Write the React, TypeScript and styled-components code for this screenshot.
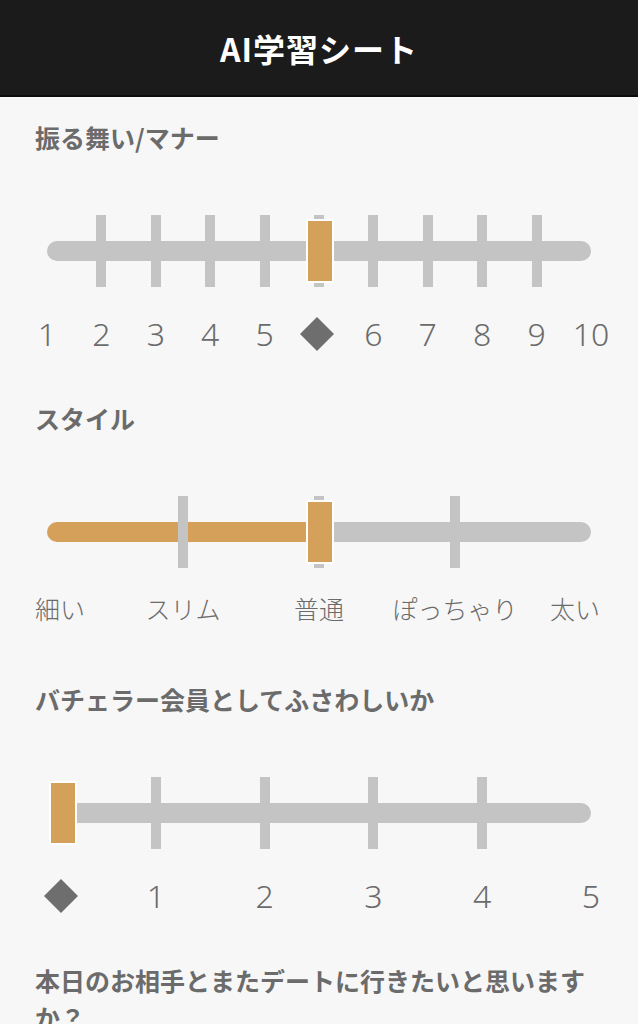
import React from 'react';
import styled, { createGlobalStyle } from 'styled-components';

const Orange = '#d4a05a';
const Rail = '#c4c4c4';
const Ink = '#6b6b6b';
const ScaleWidth = 544;
const ThumbStart = 16;
const ThumbTravel = 513;

const GlobalStyle = createGlobalStyle`
    body {
        margin: 0;
        background: #f7f7f7;
        font-family: "Noto Sans CJK JP", "Noto Sans", sans-serif;
    }
`;

const Header = styled.header`
    height: 95px;
    background: #1b1b1b;
    border-bottom: 2px solid #0b0b0b;
    display: flex;
    align-items: center;
    justify-content: center;
`;

const Title = styled.h1`
    margin: 0;
    color: #fff;
    font-size: 32px;
    font-weight: 700;
    letter-spacing: 1px;
`;

const Main = styled.main`
    display: flex;
    flex-direction: column;
    gap: 48px;
    padding: 22px 35px 0;
`;

const Section = styled.section`
    display: flex;
    flex-direction: column;
`;

const Question = styled.h2`
    margin: 0;
    font-size: 25px;
    line-height: 37px;
    font-weight: 700;
    color: ${Ink};
`;

const Scale = styled.div`
    display: flex;
    flex-direction: column;
    gap: 29px;
    margin: 59px 0 0 12px;
    width: ${ScaleWidth}px;
`;

/* track, ticks and thumb share one cell */
const RailArea = styled.div`
    position: relative;
    display: grid;
    height: 72px;
    & > * {
        grid-area: 1 / 1;
    }
`;

const TrackRow = styled.div`
    display: flex;
    align-self: center;
    height: 20px;
`;

const Fill = styled.div`
    background: ${Orange};
    border-radius: 10px 0 0 10px;
`;

const Rest = styled.div<{ $flat: boolean }>`
    flex: 1;
    background: ${Rail};
    border-radius: ${p => (p.$flat ? '0 10px 10px 0' : '10px')};
`;

const Spread = styled.div`
    display: flex;
    justify-content: space-between;
`;

const Slot = styled.div<{ $align?: 'center' | 'flex-start' | 'flex-end' }>`
    width: 0;
    display: flex;
    justify-content: ${p => p.$align ?? 'center'};
`;

const Tick = styled.div<{ $hidden: boolean }>`
    flex: none;
    width: 10px;
    height: 72px;
    background: ${p => (p.$hidden ? 'transparent' : Rail)};
`;

const Thumb = styled.div`
    position: absolute;
    top: 4px;
    width: 24px;
    height: 60px;
    margin-left: -14px;
    background: ${Orange};
    border: 2px solid #fff;
`;

const LabelRow = styled(Spread)`
    height: 36px;
    align-items: flex-start;
`;

const Label = styled.span<{ $size: number; $nudge: number }>`
    flex: none;
    margin: 0 ${p => -p.$nudge}px 0 ${p => p.$nudge}px;
    font-family: "Noto Sans", "Noto Sans CJK JP", sans-serif;
    font-size: ${p => p.$size}px;
    line-height: ${p => (p.$size > 28 ? 36 : p.$size)}px;
    font-weight: 300;
    color: ${Ink};
    white-space: nowrap;
`;

const Marker = styled.div<{ $nudge: number }>`
    flex: none;
    width: 24px;
    height: 24px;
    margin: 6px ${p => -p.$nudge}px 0 ${p => p.$nudge}px;
    background: #6e6e6e;
    transform: rotate(45deg);
`;

type Item = { text: string; align?: 'center' | 'flex-start' | 'flex-end'; nudge?: number };

type SliderProps = {
    steps: number;
    value: number;
    filled?: boolean;
    labels: Item[];
    labelSize: number;
};

function Slider({ steps, value, filled, labels, labelSize }: SliderProps) {
    const thumb = ThumbStart + ThumbTravel * (value / steps);
    const stops = Array.from({ length: steps + 1 }, (_, i) => i);

    return (
        <Scale>
            <RailArea>
                <TrackRow>
                    {filled && value > 0 && <Fill style={{ width: thumb }} />}
                    <Rest $flat={!!filled} style={filled && value === 0 ? { marginLeft: thumb } : undefined} />
                </TrackRow>
                <Spread>
                    {stops.map(i => (
                        <Slot key={i}>
                            <Tick $hidden={i === 0 || i === steps} />
                        </Slot>
                    ))}
                </Spread>
                <Thumb style={{ left: thumb }} />
            </RailArea>
            <LabelRow>
                {labels.map((l, i) => (
                    <Slot key={i} $align={l.align}>
                        {l.text === '◆' ? (
                            <Marker $nudge={thumb - (ScaleWidth * i) / steps - 2} />
                        ) : (
                            <Label $size={labelSize} $nudge={l.nudge ?? 0}>
                                {l.text}
                            </Label>
                        )}
                    </Slot>
                ))}
            </LabelRow>
        </Scale>
    );
}

const manner: Item[] = ['1', '2', '3', '4', '5', '◆', '6', '7', '8', '9', '10'].map(text => ({ text }));

const style: Item[] = [
    { text: '細い', align: 'flex-start', nudge: -12 },
    { text: 'スリム' },
    { text: '普通' },
    { text: 'ぽっちゃり' },
    { text: '太い', align: 'flex-end', nudge: 9 },
];

const fit: Item[] = ['◆', '1', '2', '3', '4', '5'].map(text => ({ text }));

export default function App() {
    return (
        <>
            <GlobalStyle />
            <Header>
                <Title>AI学習シート</Title>
            </Header>
            <Main>
                <Section>
                    <Question>振る舞い/マナー</Question>
                    <Slider steps={10} value={5} labels={manner} labelSize={32} />
                </Section>
                <Section>
                    <Question>スタイル</Question>
                    <Slider steps={4} value={2} filled labels={style} labelSize={25} />
                </Section>
                <Section>
                    <Question>バチェラー会員としてふさわしいか</Question>
                    <Slider steps={5} value={0} filled labels={fit} labelSize={32} />
                </Section>
                <Section>
                    <Question>本日のお相手とまたデートに行きたいと思いますか？</Question>
                </Section>
            </Main>
        </>
    );
}
